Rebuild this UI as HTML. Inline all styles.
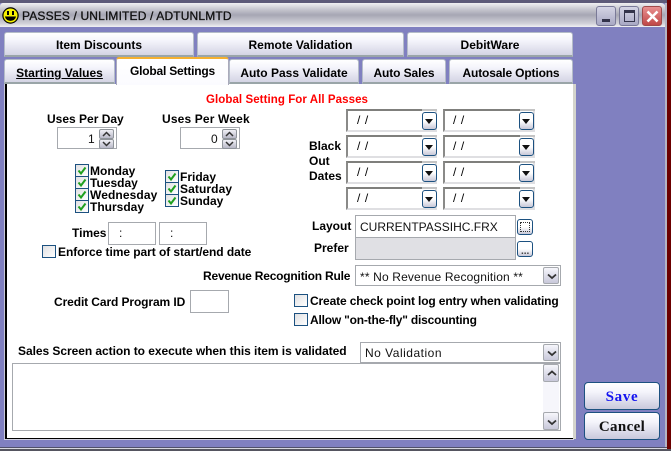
<!DOCTYPE html>
<html><head><meta charset="utf-8">
<style>
html,body{margin:0;padding:0}
body{width:671px;height:451px;position:relative;overflow:hidden;background:#8080c0;font-family:"Liberation Sans",sans-serif;color:#000}
div,span{position:absolute;box-sizing:border-box}
.t{font-weight:bold;font-size:12px;line-height:14px;white-space:nowrap}
.n{font-weight:normal;font-size:12px;line-height:14px;white-space:nowrap;color:#111}
.tab{background:linear-gradient(#fff 0%,#f4f4fb 35%,#d4d4e4 100%);border:1px solid #b4bcc8;border-bottom:2px solid #9aa5a8;border-radius:3px 3px 0 0;text-align:center;font-weight:bold;font-size:12px;line-height:25px;white-space:nowrap}
.in{background:#fff;border:1px solid #a6a9ae}
.cb{width:14px;height:13px;border:1px solid #1c5180;background:linear-gradient(135deg,#e0e0e2,#fff)}
.cb svg{position:absolute;left:1px;top:1px}
.date{background:#fff;border:2px solid #dfdfe2;border-top:2px solid #7f7f7c;border-left:2px solid #8a8a88;width:91px;height:23px}
.date::after{content:"";position:absolute;right:-2px;top:-2px;width:15px;height:2px;background:#c4c4c4}
.dt{font-size:12px;line-height:14px;white-space:nowrap;letter-spacing:.6px}
.dbtn{width:15px;height:18px;border:1px solid #1c5180;border-radius:3px;background:linear-gradient(#fff 0,#fff 50%,#c8c8d8 100%)}
.dbtn>div{left:2px;top:6px;border-left:4.500px solid transparent;border-right:4.500px solid transparent;border-top:5px solid #111}
.spin{width:15px;height:10px;border:1px solid #8f949a;background:linear-gradient(#f0f0f6,#b8b8c8);border-radius:2px}
.sb{width:16px;height:18px;border:1px solid #a6a9ae;border-radius:2px;background:linear-gradient(#f6f6fb,#c8c8da)}
.btn{left:584px;width:76px;border:1px solid #1c5180;border-radius:4px;background:linear-gradient(#fff 0,#f4f4fb 35%,#c8c8dc 100%);text-align:center;font-family:"Liberation Serif",serif;font-weight:bold;font-size:15px;letter-spacing:.7px}
</style></head><body>

<!-- window frame -->
<div style="left:0;top:0;width:671px;height:3px;background:#5d5a78"></div>
<div style="left:0;top:3px;width:666px;height:24px;background:linear-gradient(#f0f0f2 0,#c8c8d0 25%,#a6a6b4 50%,#d0d0d8 85%,#f0f0f4 100%);border-radius:3px 5px 0 0"></div>
<div style="left:667px;top:0;width:4px;height:451px;background:#6b0000"></div>
<div style="left:665px;top:3px;width:2px;height:446px;background:#b4b4c4"></div>
<div style="left:0;top:447px;width:667px;height:1px;background:#50506a"></div>
<div style="left:0;top:448px;width:667px;height:1px;background:#d8d8e0"></div>
<div style="left:0;top:449px;width:671px;height:2px;background:#555560"></div>

<!-- title icon -->
<svg style="position:absolute;left:2px;top:7px" width="17" height="17" viewBox="0 0 17 17">
<circle cx="8.500" cy="8.500" r="7.600" fill="#f5f000" stroke="#000" stroke-width="1.200"/>
<rect x="5" y="4" width="2" height="4" fill="#000"/><rect x="10" y="4" width="2" height="4" fill="#000"/>
<path d="M3.500 9.500C5 14.500 12 14.500 13.500 9.500" fill="#000" stroke="#000" stroke-width="1.200"/>
</svg>
<span class="t" style="left:22px;top:9px;font-size:12px;font-weight:normal;-webkit-text-stroke:.3px #111;letter-spacing:.15px;color:#111">PASSES / UNLIMITED / ADTUNLMTD</span>

<!-- window buttons -->
<div style="left:596px;top:6px;width:20px;height:20px;border:1px solid #7a7a98;border-radius:3px;background:linear-gradient(#d4d4e4,#a8a8c4)"><div style="left:5px;top:12px;width:8px;height:3px;background:#33334a"></div></div>
<div style="left:619px;top:6px;width:20px;height:20px;border:1px solid #7a7a98;border-radius:3px;background:linear-gradient(#d4d4e4,#a8a8c4)"><div style="left:4px;top:3px;width:11px;height:12px;border:1px solid #33334a;border-top:3px solid #33334a"></div></div>
<div style="left:642px;top:6px;width:20px;height:20px;border:1px solid #a04a4a;border-radius:3px;background:linear-gradient(#e89090,#c04848)">
<svg style="position:absolute;left:2px;top:2px" width="15" height="15" viewBox="0 0 15 15"><path d="M2.500 2.500L12.500 12.500M12.500 2.500L2.500 12.500" stroke="#fff" stroke-width="2.600"/></svg></div>

<!-- tabs -->
<div class="tab" style="left:4px;top:32px;width:190px;height:25px">Item Discounts</div>
<div class="tab" style="left:197px;top:32px;width:207px;height:25px">Remote Validation</div>
<div class="tab" style="left:407px;top:32px;width:166px;height:25px">DebitWare</div>
<div class="tab" style="left:4px;top:59px;width:111px;height:25px;line-height:27px"><u>Starting Values</u></div>
<div class="tab" style="left:229px;top:59px;width:130px;height:25px;line-height:27px">Auto Pass Validate</div>
<div class="tab" style="left:362px;top:59px;width:84px;height:25px;line-height:27px;letter-spacing:-.1px">Auto Sales</div>
<div class="tab" style="left:449px;top:59px;width:124px;height:25px;line-height:27px;letter-spacing:-.15px">Autosale Options</div>

<!-- panel -->
<div style="left:5px;top:84px;width:568px;height:355px;background:#fff;border-left:2px solid #000;border-bottom:1px solid #000"></div>
<div style="left:573px;top:84px;width:3px;height:355px;background:#d4d4cc"></div>
<div style="left:4px;top:84px;width:1px;height:356px;background:#c8c8d8"></div>
<div style="left:4px;top:439px;width:570px;height:1px;background:#d0d0e0"></div>
<div style="left:116px;top:57px;width:113px;height:28px;background:linear-gradient(#fff,#fbfbff);border:1px solid #aab;border-bottom:0;border-top:2px solid #f5b030;border-radius:3px 3px 0 0;text-align:center;font-weight:bold;font-size:12px;line-height:25px;letter-spacing:-.2px;white-space:nowrap">Global Settings</div>

<span class="t" style="left:206px;top:93px;color:#f00;font-size:11.500px;letter-spacing:.07px">Global Setting For All Passes</span>

<!-- uses -->
<span class="t" style="left:47px;top:112px">Uses Per Day</span>
<span class="t" style="left:162px;top:112px;letter-spacing:.15px">Uses Per Week</span>
<div class="in" style="left:57px;top:127px;width:60px;height:22px"></div>
<span class="n" style="left:88px;top:132px">1</span>
<div class="spin" style="left:99px;top:129px"><svg style="position:absolute;left:2px;top:1px" width="9" height="6"><path d="M1 5L4.500 1.500L8 5" fill="none" stroke="#333" stroke-width="1.500"/></svg></div>
<div class="spin" style="left:99px;top:139px"><svg style="position:absolute;left:2px;top:1px" width="9" height="6"><path d="M1 1L4.500 4.500L8 1" fill="none" stroke="#333" stroke-width="1.500"/></svg></div>
<div class="in" style="left:180px;top:127px;width:60px;height:22px"></div>
<span class="n" style="left:211px;top:132px">0</span>
<div class="spin" style="left:222px;top:129px"><svg style="position:absolute;left:2px;top:1px" width="9" height="6"><path d="M1 5L4.500 1.500L8 5" fill="none" stroke="#333" stroke-width="1.500"/></svg></div>
<div class="spin" style="left:222px;top:139px"><svg style="position:absolute;left:2px;top:1px" width="9" height="6"><path d="M1 1L4.500 4.500L8 1" fill="none" stroke="#333" stroke-width="1.500"/></svg></div>

<!-- days -->
<div class="cb" style="left:75px;top:164px"><svg width="10" height="10"><path d="M1.500 4.500L4 7.500L8.500 1.500" fill="none" stroke="#1fa01f" stroke-width="2"/></svg></div>
<div class="cb" style="left:75px;top:176px"><svg width="10" height="10"><path d="M1.500 4.500L4 7.500L8.500 1.500" fill="none" stroke="#1fa01f" stroke-width="2"/></svg></div>
<div class="cb" style="left:75px;top:188px"><svg width="10" height="10"><path d="M1.500 4.500L4 7.500L8.500 1.500" fill="none" stroke="#1fa01f" stroke-width="2"/></svg></div>
<div class="cb" style="left:75px;top:200px"><svg width="10" height="10"><path d="M1.500 4.500L4 7.500L8.500 1.500" fill="none" stroke="#1fa01f" stroke-width="2"/></svg></div>
<span class="t" style="left:90px;top:164px">Monday</span>
<span class="t" style="left:90px;top:176px">Tuesday</span>
<span class="t" style="left:90px;top:188px;letter-spacing:.1px">Wednesday</span>
<span class="t" style="left:90px;top:200px">Thursday</span>
<div class="cb" style="left:165px;top:170px"><svg width="10" height="10"><path d="M1.500 4.500L4 7.500L8.500 1.500" fill="none" stroke="#1fa01f" stroke-width="2"/></svg></div>
<div class="cb" style="left:165px;top:182px"><svg width="10" height="10"><path d="M1.500 4.500L4 7.500L8.500 1.500" fill="none" stroke="#1fa01f" stroke-width="2"/></svg></div>
<div class="cb" style="left:165px;top:194px"><svg width="10" height="10"><path d="M1.500 4.500L4 7.500L8.500 1.500" fill="none" stroke="#1fa01f" stroke-width="2"/></svg></div>
<span class="t" style="left:180px;top:170px">Friday</span>
<span class="t" style="left:180px;top:182px;letter-spacing:.1px">Saturday</span>
<span class="t" style="left:180px;top:194px">Sunday</span>

<!-- times -->
<span class="t" style="left:72px;top:226px">Times</span>
<div class="in" style="left:108px;top:222px;width:48px;height:23px"></div>
<span class="n" style="left:119px;top:226px">:</span>
<div class="in" style="left:159px;top:222px;width:48px;height:23px"></div>
<span class="n" style="left:170px;top:226px">:</span>
<div class="cb" style="left:42px;top:245px"></div>
<span class="t" style="left:58px;top:245px;letter-spacing:-.06px">Enforce time part of start/end date</span>

<!-- dates -->
<div class="date" style="left:346px;top:109px"></div><span class="dt" style="left:357px;top:113px">/ /</span>
<div class="dbtn" style="left:422px;top:112px"><div></div></div>
<div class="date" style="left:443px;top:109px;width:92px"></div><span class="dt" style="left:453px;top:113px">/ /</span>
<div class="dbtn" style="left:519px;top:112px"><div></div></div>

<div class="date" style="left:346px;top:135px"></div><span class="dt" style="left:357px;top:139px">/ /</span>
<div class="dbtn" style="left:422px;top:138px"><div></div></div>
<div class="date" style="left:443px;top:135px;width:92px"></div><span class="dt" style="left:453px;top:139px">/ /</span>
<div class="dbtn" style="left:519px;top:138px"><div></div></div>

<div class="date" style="left:346px;top:161px"></div><span class="dt" style="left:357px;top:165px">/ /</span>
<div class="dbtn" style="left:422px;top:164px"><div></div></div>
<div class="date" style="left:443px;top:161px;width:92px"></div><span class="dt" style="left:453px;top:165px">/ /</span>
<div class="dbtn" style="left:519px;top:164px"><div></div></div>

<div class="date" style="left:346px;top:187px"></div><span class="dt" style="left:357px;top:191px">/ /</span>
<div class="dbtn" style="left:422px;top:190px"><div></div></div>
<div class="date" style="left:443px;top:187px;width:92px"></div><span class="dt" style="left:453px;top:191px">/ /</span>
<div class="dbtn" style="left:519px;top:190px"><div></div></div>

<span class="t" style="left:309px;top:139px">Black</span>
<span class="t" style="left:309px;top:154px">Out</span>
<span class="t" style="left:309px;top:169px">Dates</span>

<!-- layout -->
<span class="t" style="left:312px;top:219px">Layout</span>
<span class="t" style="left:314px;top:241px">Prefer</span>
<div class="in" style="left:355px;top:215px;width:161px;height:23px"></div>
<span class="n" style="left:360px;top:220px;font-size:12px">CURRENTPASSIHC.FRX</span>
<div class="in" style="left:355px;top:237px;width:161px;height:23px;background:#e0e0e4"></div>
<div class="dbtn" style="left:517px;top:219px;width:16px;height:16px;border-width:1px;border-color:#1c5180"><span style="left:2px;top:2px;width:10px;height:10px;border:1px dotted #333"></span></div>
<div class="dbtn" style="left:517px;top:241px;width:16px;height:16px"><span style="left:3px;top:5px;font-size:10px;line-height:10px;font-weight:bold;color:#444">...</span></div>

<!-- revenue -->
<span class="t" style="left:203px;top:269px;letter-spacing:-.2px">Revenue Recognition Rule</span>
<div class="in" style="left:355px;top:265px;width:206px;height:21px"></div>
<span class="n" style="left:360px;top:270px;letter-spacing:.15px">** No Revenue Recognition **</span>
<div class="sb" style="left:543px;top:267px;height:17px"><svg style="position:absolute;left:3px;top:5px" width="10" height="7"><path d="M1 1.500L5 5L9 1.500" fill="none" stroke="#333" stroke-width="1.800"/></svg></div>

<span class="t" style="left:54px;top:295px;letter-spacing:-.1px">Credit Card Program ID</span>
<div class="in" style="left:190px;top:290px;width:39px;height:23px"></div>
<div class="cb" style="left:294px;top:294px"></div>
<span class="t" style="left:310px;top:294px;letter-spacing:-.14px">Create check point log entry when validating</span>
<div class="cb" style="left:294px;top:313px"></div>
<span class="t" style="left:310px;top:313px;letter-spacing:-.2px">Allow "on-the-fly" discounting</span>

<!-- sales -->
<span class="t" style="left:18px;top:344px;letter-spacing:-.05px">Sales Screen action to execute when this item is validated</span>
<div class="in" style="left:360px;top:342px;width:201px;height:21px"></div>
<span class="n" style="left:365px;top:346px;letter-spacing:.5px">No Validation</span>
<div class="sb" style="left:543px;top:344px;height:17px"><svg style="position:absolute;left:3px;top:5px" width="10" height="7"><path d="M1 1.500L5 5L9 1.500" fill="none" stroke="#333" stroke-width="1.800"/></svg></div>
<div class="in" style="left:12px;top:363px;width:549px;height:68px"></div>
<div style="left:543px;top:364px;width:16px;height:66px;background:#f6f6fb"></div>
<div class="sb" style="left:543px;top:364px"><svg style="position:absolute;left:3px;top:5px" width="10" height="7"><path d="M1 5L5 1.500L9 5" fill="none" stroke="#333" stroke-width="1.800"/></svg></div>
<div class="sb" style="left:543px;top:412px"><svg style="position:absolute;left:3px;top:6px" width="10" height="7"><path d="M1 1.500L5 5L9 1.500" fill="none" stroke="#333" stroke-width="1.800"/></svg></div>

<!-- buttons -->
<div class="btn" style="top:382px;height:28px;line-height:28px;color:#1414f0">Save</div>
<div class="btn" style="top:412px;height:28px;line-height:28px;color:#111;letter-spacing:.35px">Cancel</div>

</body></html>
